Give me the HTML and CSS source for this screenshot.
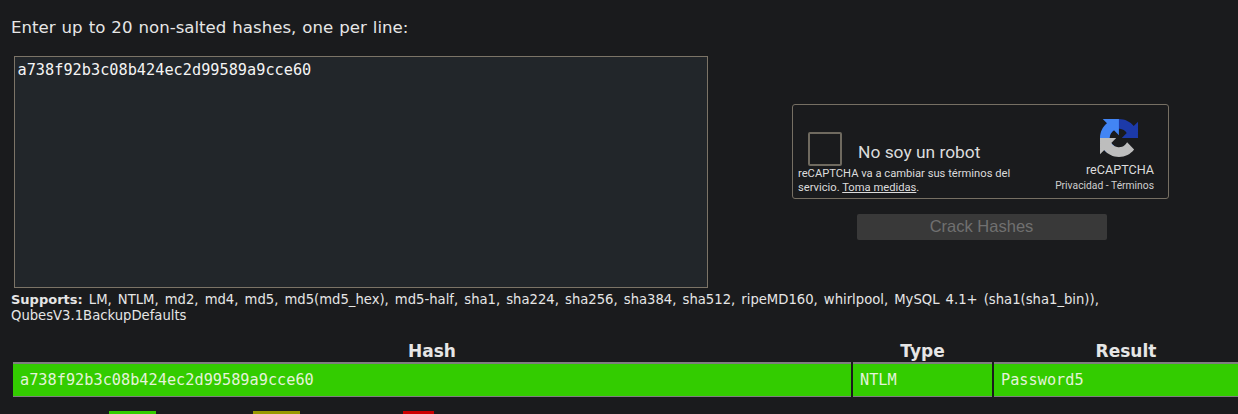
FILE: index.html
```html
<!DOCTYPE html>
<html lang="en">
<head>
<meta charset="utf-8">
<title>Hash cracker</title>
<link rel="stylesheet" href="styles.css">
</head>
<body>
<main class="page">
  <p class="prompt">Enter up to 20 non-salted hashes, one per line:</p>
  <form class="entry">
    <textarea class="hashes" spellcheck="false">a738f92b3c08b424ec2d99589a9cce60</textarea>
    <div class="side">
      <div class="captcha">
        <div class="captcha-main">
          <div class="check-row">
            <span class="checkbox"></span>
            <span class="check-label">No soy un robot</span>
          </div>
          <p class="terms">reCAPTCHA va a cambiar sus términos del<br>servicio. <span class="terms-link">Toma medidas</span>.</p>
        </div>
        <div class="captcha-brand">
          <svg class="logo" viewBox="0 0 64 64" aria-hidden="true">
            <path fill="#1c3aa9" d="M64 31.955l-.033-1.37V4.687l-7.16 7.16C50.948 4.674 42.033.093 32.05.093c-10.4 0-19.622 4.96-25.458 12.64l11.736 11.86a15.55 15.55 0 0 1 4.754-5.334c2.05-1.6 4.952-2.906 8.968-2.906.485 0 .86.057 1.135.163 4.976.393 9.288 3.14 11.828 7.124l-8.307 8.307 32.294-.002"/>
            <path fill="#4285f4" d="M31.862 0l-1.37.033H4.594l7.16 7.16C4.58 13.05 0 21.966 0 31.95c0 10.4 4.96 19.622 12.64 25.458l11.86-11.736a15.55 15.55 0 0 1-5.334-4.754c-1.6-2.05-2.906-4.952-2.906-8.968 0-.485.057-.86.163-1.135.393-4.976 3.14-9.288 7.124-11.828l8.307 8.307L31.862 0"/>
            <path fill="#bdbdbd" d="M.001 31.947l.033 1.37v25.898l7.16-7.16c5.86 7.173 14.774 11.754 24.76 11.754 10.4 0 19.622-4.96 25.458-12.64L45.676 39.31a15.55 15.55 0 0 1-4.754 5.334c-2.05 1.6-4.952 2.906-8.968 2.906-.485 0-.86-.057-1.135-.163-4.976-.393-9.288-3.14-11.828-7.124l8.307-8.307-32.294.002"/>
          </svg>
          <span class="brand-name">reCAPTCHA</span>
          <span class="brand-links">Privacidad - Términos</span>
        </div>
      </div>
      <button class="crack" type="button" disabled>Crack Hashes</button>
    </div>
  </form>
  <p class="supports"><strong class="supports-label">Supports:</strong> LM, NTLM, md2, md4, md5, md5(md5_hex), md5-half, sha1, sha224, sha256, sha384, sha512, ripeMD160, whirlpool, MySQL 4.1+ (sha1(sha1_bin)), QubesV3.1BackupDefaults</p>
  <table class="results">
    <thead>
      <tr><th class="col-hash">Hash</th><th class="col-type">Type</th><th class="col-result">Result</th></tr>
    </thead>
    <tbody>
      <tr><td>a738f92b3c08b424ec2d99589a9cce60</td><td>NTLM</td><td>Password5</td></tr>
    </tbody>
  </table>
  <div class="legend">
    <span class="swatch swatch-green"></span>
    <span class="swatch swatch-olive"></span>
    <span class="swatch swatch-red"></span>
  </div>
</main>
</body>
</html>
```
FILE: styles.css
```css
html, body {
  margin: 0;
  height: 100%;
  overflow: hidden;
  background: #1a1b1d;
}
.page {
  width: 1238px;
  padding: 18px 0 0 11px;
  box-sizing: border-box;
  color: #e6e6e6;
  font-family: "DejaVu Sans", Verdana, sans-serif;
}
.prompt {
  margin: 0;
  font-size: 16.6px;
  word-spacing: 0.75px;
  line-height: 20px;
}
.entry {
  display: flex;
  margin: 18px 0 0 3px;
}
.hashes {
  display: block;
  width: 694px;
  height: 232px;
  box-sizing: border-box;
  padding: 4px 2.5px;
  margin: 0;
  resize: none;
  overflow: hidden;
  border: 1px solid #7c7467;
  border-radius: 0;
  outline: none;
  background: #22262a;
  color: #f4f4f4;
  font-family: "DejaVu Sans Mono", monospace;
  font-size: 15.25px;
  line-height: 18px;
}
.side {
  display: flex;
  flex-direction: column;
  align-items: center;
  width: 377px;
  margin: 48px 0 0 84px;
}
.captcha {
  display: flex;
  justify-content: space-between;
  width: 100%;
  height: 95px;
  box-sizing: border-box;
  padding: 27px 14px 0 5px;
  border: 1px solid #766f63;
  border-radius: 3px;
  background: #1a1b1d;
  font-family: Roboto, "Liberation Sans", sans-serif;
}
.check-row {
  display: flex;
  align-items: flex-start;
  height: 35px;
  margin-left: 10px;
}
.checkbox {
  width: 34px;
  height: 34px;
  box-sizing: border-box;
  border: 2px solid #6f6a5f;
  border-radius: 2px;
}
.check-label {
  margin: 10px 0 0 16px;
  font-size: 17.4px;
  color: #dcdcdc;
}
.terms {
  margin: 0;
  font-size: 11.2px;
  line-height: 14px;
  color: #dcdcdc;
}
.terms-link {
  text-decoration: underline;
}
.captcha-brand {
  display: flex;
  flex-direction: column;
  align-items: flex-end;
  margin-top: -13px;
}
.logo {
  width: 38px;
  height: 38px;
  margin-right: 16px;
}
.brand-name {
  margin-top: 5px;
  font-size: 12.6px;
  line-height: 15px;
  color: #dcdcdc;
}
.brand-links {
  margin-top: 3px;
  font-size: 10.3px;
  line-height: 12px;
  color: #cfcfcf;
}
.crack {
  width: 250px;
  height: 26px;
  margin: 15px 0 0 2px;
  padding: 0 0 2px;
  border: 0;
  border-radius: 2px;
  background: #393939;
  color: #707070;
  font-family: "Liberation Sans", Arial, sans-serif;
  font-size: 16.5px;
}
.supports {
  width: 1120px;
  margin: 4px 0 0;
  font-size: 13.2px;
  word-spacing: 1.9px;
  line-height: 16px;
}
.supports-label {
  font-size: 13px;
  word-spacing: 0;
}
.results {
  width: 1249px;
  margin-top: 12px;
  table-layout: fixed;
  border-collapse: separate;
  border-spacing: 2px 0;
}
.col-hash { width: 838px; }
.col-type { width: 139px; }
.results th {
  height: 26px;
  box-sizing: border-box;
  padding: 4px 0 0;
  font-size: 17px;
  font-weight: 700;
  color: #e6e6e6;
}
.results td {
  height: 35px;
  box-sizing: border-box;
  padding: 0 7px;
  background: #33cc00;
  border-top: 2px solid #7f7f7f;
  border-bottom: 1px solid #7f7f7f;
  color: #e4f3da;
  font-family: "DejaVu Sans Mono", monospace;
  font-size: 15.25px;
}
.legend {
  display: flex;
  margin: 14px 0 0 98px;
}
.swatch {
  display: block;
  height: 3px;
}
.swatch-green { width: 47px; background: #33cc00; }
.swatch-olive { width: 47px; margin-left: 97px; background: #999900; }
.swatch-red { width: 31px; margin-left: 103px; background: #cc0000; }
```
